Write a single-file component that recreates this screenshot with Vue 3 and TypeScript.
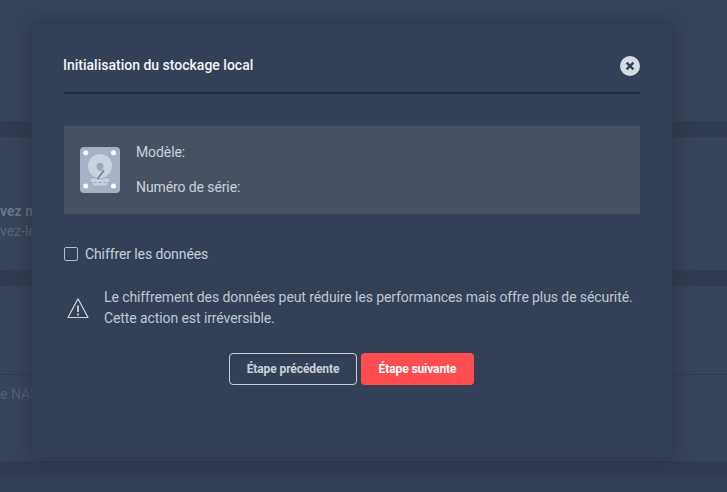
<script setup lang="ts">
const title = 'Initialisation du stockage local'
</script>

<template>
  <div class="page">
    <div class="backdrop">
      <div class="band first"></div>
      <p class="bg-strong">vez ne</p>
      <p class="bg-text">vez-le</p>
      <div class="band second"></div>
      <div class="rule"></div>
      <p class="bg-nas">e NAS</p>
      <div class="band third"></div>
      <div class="foot"></div>
    </div>

    <section class="modal">
      <header class="head">
        <h1>{{ title }}</h1>
        <button class="close" type="button" aria-label="Fermer">
          <svg width="10" height="10" viewBox="0 0 10 10">
            <path d="M1.6 1.6 8.4 8.4M8.4 1.6 1.6 8.4" stroke="#344056" stroke-width="2.4" fill="none" />
          </svg>
        </button>
      </header>

      <div class="disk">
        <svg class="hdd" width="40" height="46" viewBox="0 0 40 46">
          <rect width="40" height="46" rx="4" fill="#a5b1c4" />
          <circle cx="5.700" cy="5.700" r="2.500" fill="#fff" />
          <circle cx="33.500" cy="5.700" r="2.500" fill="#fff" />
          <circle cx="5.700" cy="39" r="2.500" fill="#fff" />
          <circle cx="33.500" cy="39" r="2.500" fill="#fff" />
          <circle cx="20" cy="19" r="12" fill="#c9d3de" />
          <path d="M11 31.500h18v3l-2 1v1.500q0 1.500-1.500 1.500h-11Q13 38.500 13 37v-1.500l-2-1z" fill="#c9d3de" />
          <circle cx="20" cy="19.500" r="3.400" fill="#9aa7ba" />
          <path d="M18.700 24q3-1.200 5 -.7M17.300 32h6" stroke="#a5b1c4" stroke-width="1.200" fill="none" />
          <path d="M24 23.500 17.300 32" stroke="#6f7e95" stroke-width="1.500" fill="none" />
          <path d="M14 35.500h2.500M18.500 35.500h3M23.500 35.500h2.500" stroke="#8f9cb0" stroke-width="1.200" />
        </svg>
        <div class="disk-info">
          <div>Modèle:</div>
          <div>Numéro de série:</div>
        </div>
      </div>

      <label class="check">
        <span class="box"></span>
        <span>Chiffrer les données</span>
      </label>

      <div class="warning">
        <svg class="warn-icon" width="22" height="22" viewBox="0 0 22 22">
          <path d="M11 1.800 1 20.500h20z" fill="none" stroke="#cfd6dd" stroke-width="1.200" stroke-linejoin="round" />
          <path d="M11 8.500v6.500M11 16.500v2" stroke="#e6eaee" stroke-width="1.500" />
        </svg>
        <p>Le chiffrement des données peut réduire les performances mais offre plus de sécurité.<br />Cette action est irréversible.</p>
      </div>

      <div class="actions">
        <button class="btn ghost" type="button">Étape précédente</button>
        <button class="btn primary" type="button">Étape suivante</button>
      </div>
    </section>
  </div>
</template>

<style>
html,
body {
  margin: 0;
  background: #374359;
}
</style>

<style scoped>
.page {
  position: relative;
  width: 727px;
  height: 492px;
  overflow: hidden;
  background: #384459;
  font-family: Roboto, "Liberation Sans", sans-serif;
}

.backdrop {
  display: flex;
  flex-direction: column;
  height: 100%;
  padding-top: 121px;
  box-sizing: border-box;
}

.band {
  height: 16px;
  background: #323c50;
  flex: none;
}

.bg-strong,
.bg-text,
.bg-nas {
  margin: 0;
  font-size: 14px;
  line-height: 20px;
  white-space: nowrap;
}

.bg-strong {
  margin-top: 64px;
  font-weight: 700;
  color: #6c7687;
}

.bg-text {
  color: #5c6679;
}

.second {
  margin-top: 29px;
}

.rule {
  height: 1px;
  margin-top: 88px;
  background: #303b4e;
}

.bg-nas {
  margin-top: 9px;
  color: #556074;
}

.third {
  margin-top: 57px;
}

.foot {
  flex: 1;
  background: #344056;
}

.modal {
  position: absolute;
  left: 32px;
  top: 24px;
  width: 640px;
  height: 433px;
  box-sizing: border-box;
  padding: 0 32px;
  border-radius: 4px;
  background: #344056;
  box-shadow: 0 0 18px 4px rgba(38, 46, 60, 0.55);
  color: #c6ced8;
}

.head {
  display: flex;
  align-items: center;
  justify-content: space-between;
  height: 52px;
  padding-top: 16px;
  border-bottom: 2px solid #222e3f;
}

.head h1 {
  margin: 0 0 3px -1px;
  font-size: 14px;
  font-weight: 500;
  line-height: 20px;
  color: #f2f4f6;
}

.close {
  display: flex;
  align-items: center;
  justify-content: center;
  width: 20px;
  height: 20px;
  padding: 0;
  border: 0;
  border-radius: 50%;
  background: #d5dde2;
}

.disk {
  display: flex;
  align-items: center;
  gap: 16px;
  height: 88px;
  margin-top: 32px;
  padding-left: 16px;
  background: #485161;
}

.hdd {
  flex: none;
}

.disk-info {
  display: flex;
  flex-direction: column;
  gap: 15px;
  padding-bottom: 2px;
  font-size: 14px;
  line-height: 20px;
  letter-spacing: -0.1px;
  color: #c8d2de;
}

.check {
  display: flex;
  align-items: center;
  gap: 7px;
  margin-top: 30px;
  font-size: 14px;
  line-height: 20px;
  letter-spacing: -0.1px;
  color: #c6ced8;
}

.box {
  width: 12px;
  height: 12px;
  border: 1px solid #b4bdc9;
  border-radius: 2px;
}

.warning {
  display: flex;
  align-items: center;
  gap: 15px;
  margin-top: 23px;
  padding-left: 3px;
}

.warn-icon {
  flex: none;
}

.warning p {
  margin: 0;
  font-size: 14px;
  line-height: 21px;
  letter-spacing: -0.09px;
  color: #c0c7d1;
}

.actions {
  display: flex;
  justify-content: center;
  gap: 4px;
  margin-top: 24px;
  padding-right: 1px;
}

.btn {
  height: 32px;
  box-sizing: border-box;
  border-radius: 4px;
  font-family: inherit;
  font-size: 12px;
  font-weight: 700;
  letter-spacing: -0.1px;
  padding: 0;
}

.ghost {
  width: 128px;
  border: 1px solid #c8d0d8;
  background: transparent;
  color: #c8d0d8;
}

.primary {
  width: 113px;
  border: 0;
  background: #ff4d4f;
  color: #fff;
}
</style>
